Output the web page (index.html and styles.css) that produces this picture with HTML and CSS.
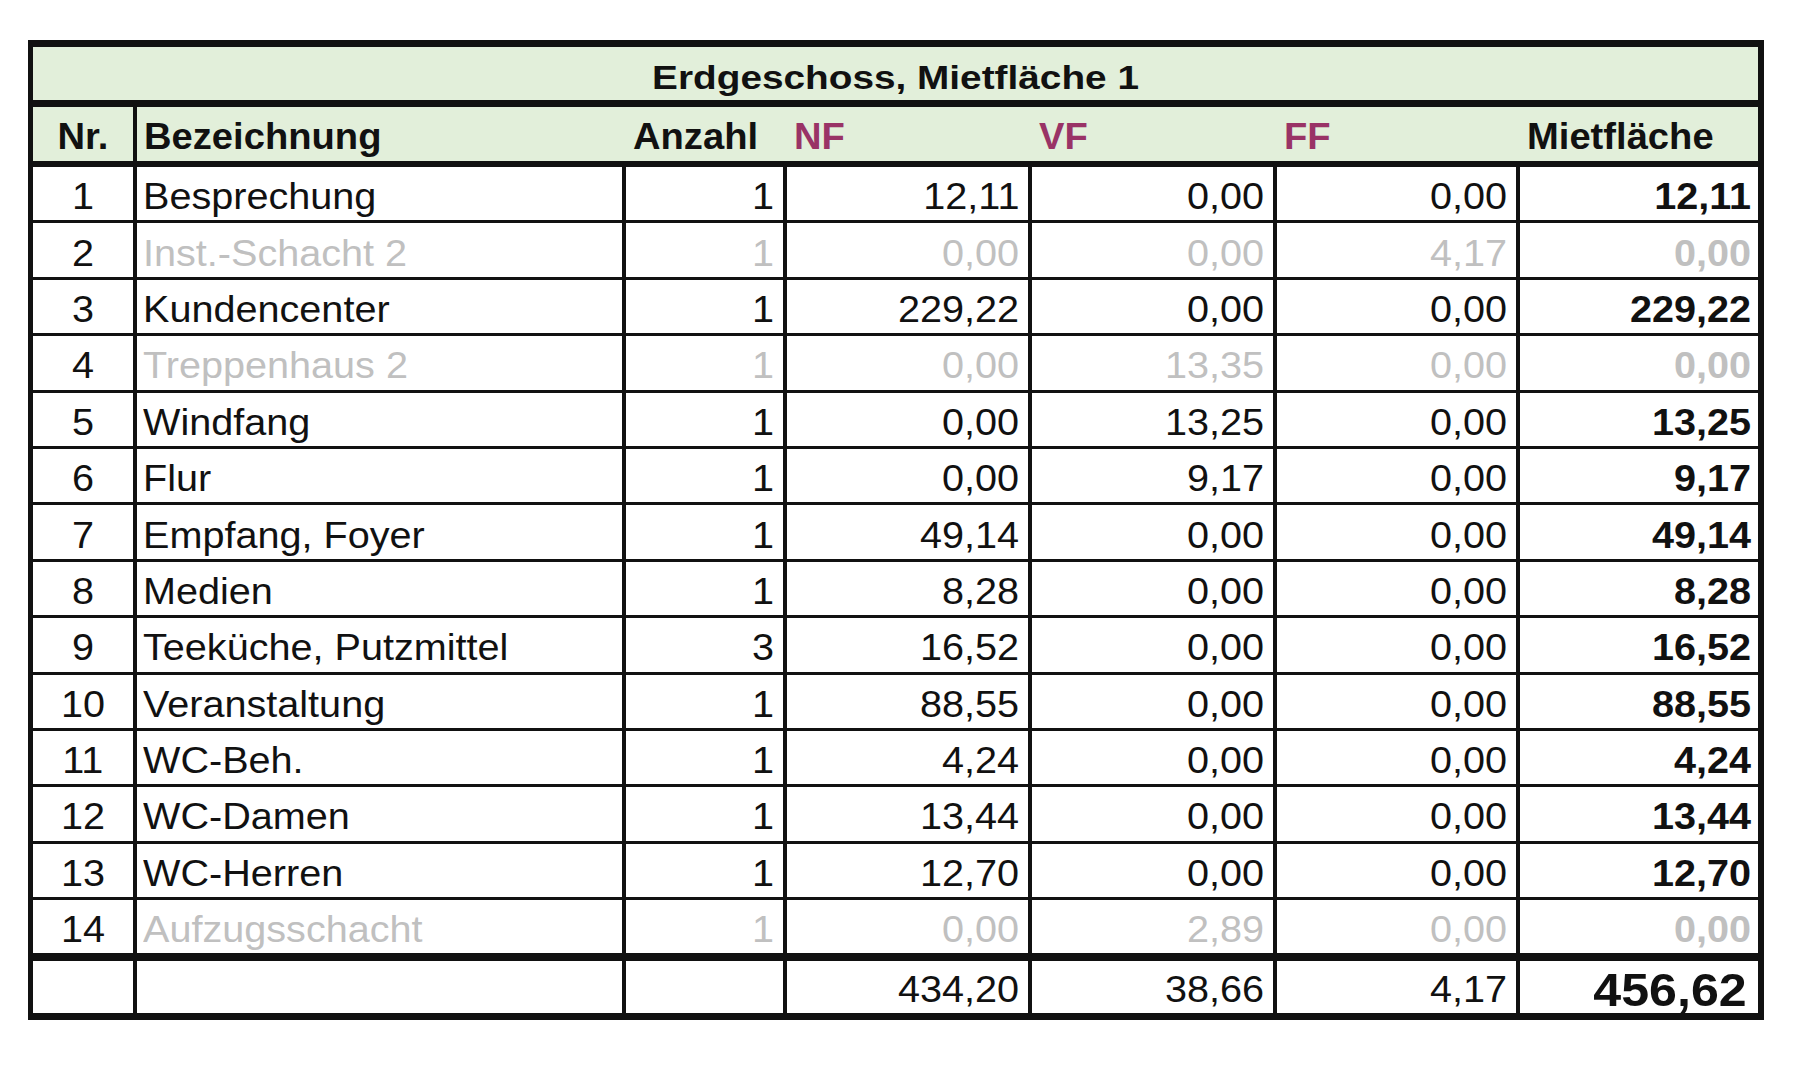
FILE: index.html
```html
<!DOCTYPE html>
<html lang="de">
<head>
<meta charset="utf-8">
<title>Erdgeschoss, Mietfläche 1</title>
<link rel="stylesheet" href="styles.css">
</head>
<body>
<div class="sheet">
  <div class="title"><span>Erdgeschoss, Mietfläche 1</span></div>

  <div class="hd nr"><span>Nr.</span></div>
  <div class="hd"><span>Bezeichnung</span></div>
  <div class="hd"><span>Anzahl</span></div>
  <div class="hd pk"><span>NF</span></div>
  <div class="hd pk"><span>VF</span></div>
  <div class="hd pk"><span>FF</span></div>
  <div class="hd"><span>Mietfläche</span></div>

  <div class="row">
    <div class="c nr"><span>1</span></div><div class="c txt"><span>Besprechung</span></div><div class="c num"><span>1</span></div><div class="c num"><span>12,11</span></div><div class="c num"><span>0,00</span></div><div class="c num"><span>0,00</span></div><div class="c num tot"><span>12,11</span></div>
  </div>
  <div class="row dim">
    <div class="c nr"><span>2</span></div><div class="c txt"><span>Inst.-Schacht 2</span></div><div class="c num"><span>1</span></div><div class="c num"><span>0,00</span></div><div class="c num"><span>0,00</span></div><div class="c num"><span>4,17</span></div><div class="c num tot"><span>0,00</span></div>
  </div>
  <div class="row">
    <div class="c nr"><span>3</span></div><div class="c txt"><span>Kundencenter</span></div><div class="c num"><span>1</span></div><div class="c num"><span>229,22</span></div><div class="c num"><span>0,00</span></div><div class="c num"><span>0,00</span></div><div class="c num tot"><span>229,22</span></div>
  </div>
  <div class="row dim">
    <div class="c nr"><span>4</span></div><div class="c txt"><span>Treppenhaus 2</span></div><div class="c num"><span>1</span></div><div class="c num"><span>0,00</span></div><div class="c num"><span>13,35</span></div><div class="c num"><span>0,00</span></div><div class="c num tot"><span>0,00</span></div>
  </div>
  <div class="row">
    <div class="c nr"><span>5</span></div><div class="c txt"><span>Windfang</span></div><div class="c num"><span>1</span></div><div class="c num"><span>0,00</span></div><div class="c num"><span>13,25</span></div><div class="c num"><span>0,00</span></div><div class="c num tot"><span>13,25</span></div>
  </div>
  <div class="row">
    <div class="c nr"><span>6</span></div><div class="c txt"><span>Flur</span></div><div class="c num"><span>1</span></div><div class="c num"><span>0,00</span></div><div class="c num"><span>9,17</span></div><div class="c num"><span>0,00</span></div><div class="c num tot"><span>9,17</span></div>
  </div>
  <div class="row">
    <div class="c nr"><span>7</span></div><div class="c txt"><span>Empfang, Foyer</span></div><div class="c num"><span>1</span></div><div class="c num"><span>49,14</span></div><div class="c num"><span>0,00</span></div><div class="c num"><span>0,00</span></div><div class="c num tot"><span>49,14</span></div>
  </div>
  <div class="row">
    <div class="c nr"><span>8</span></div><div class="c txt"><span>Medien</span></div><div class="c num"><span>1</span></div><div class="c num"><span>8,28</span></div><div class="c num"><span>0,00</span></div><div class="c num"><span>0,00</span></div><div class="c num tot"><span>8,28</span></div>
  </div>
  <div class="row">
    <div class="c nr"><span>9</span></div><div class="c txt"><span>Teeküche, Putzmittel</span></div><div class="c num"><span>3</span></div><div class="c num"><span>16,52</span></div><div class="c num"><span>0,00</span></div><div class="c num"><span>0,00</span></div><div class="c num tot"><span>16,52</span></div>
  </div>
  <div class="row">
    <div class="c nr"><span>10</span></div><div class="c txt"><span>Veranstaltung</span></div><div class="c num"><span>1</span></div><div class="c num"><span>88,55</span></div><div class="c num"><span>0,00</span></div><div class="c num"><span>0,00</span></div><div class="c num tot"><span>88,55</span></div>
  </div>
  <div class="row">
    <div class="c nr"><span>11</span></div><div class="c txt"><span>WC-Beh.</span></div><div class="c num"><span>1</span></div><div class="c num"><span>4,24</span></div><div class="c num"><span>0,00</span></div><div class="c num"><span>0,00</span></div><div class="c num tot"><span>4,24</span></div>
  </div>
  <div class="row">
    <div class="c nr"><span>12</span></div><div class="c txt"><span>WC-Damen</span></div><div class="c num"><span>1</span></div><div class="c num"><span>13,44</span></div><div class="c num"><span>0,00</span></div><div class="c num"><span>0,00</span></div><div class="c num tot"><span>13,44</span></div>
  </div>
  <div class="row">
    <div class="c nr"><span>13</span></div><div class="c txt"><span>WC-Herren</span></div><div class="c num"><span>1</span></div><div class="c num"><span>12,70</span></div><div class="c num"><span>0,00</span></div><div class="c num"><span>0,00</span></div><div class="c num tot"><span>12,70</span></div>
  </div>
  <div class="row dim last">
    <div class="c nr"><span>14</span></div><div class="c txt"><span>Aufzugsschacht</span></div><div class="c num"><span>1</span></div><div class="c num"><span>0,00</span></div><div class="c num"><span>2,89</span></div><div class="c num"><span>0,00</span></div><div class="c num tot"><span>0,00</span></div>
  </div>
  <div class="row sum">
    <div class="c nr"></div><div class="c txt"></div><div class="c num"></div><div class="c num"><span>434,20</span></div><div class="c num"><span>38,66</span></div><div class="c num"><span>4,17</span></div><div class="c num tot grand"><span>456,62</span></div>
  </div>
</div>
</body>
</html>
```

FILE: styles.css
```css
html, body {
  margin: 0;
  padding: 0;
  background: #ffffff;
}

body {
  font-family: "Liberation Sans", Arial, sans-serif;
  color: #111111;
}

.sheet {
  display: grid;
  grid-template-columns: 104px 489px 161px 245px 245px 243px 238px;
  width: 1736px;
  box-sizing: border-box;
  margin: 40px 0 0 28px;
  border-style: solid;
  border-color: #111111;
  border-width: 7px 6px 7px 5px;
}

.title {
  grid-column: 1 / -1;
  height: 60px;
  box-sizing: border-box;
  border-bottom: 7px solid #111111;
  background: #e2efda;
  display: flex;
  align-items: center;
  justify-content: center;
  padding-top: 6px;
  font-weight: bold;
  font-size: 34px;
  line-height: 1;
  white-space: nowrap;
}

.title span {
  transform: scaleX(1.14);
}

.hd {
  height: 60px;
  box-sizing: border-box;
  border-bottom: 6px solid #111111;
  background: #e2efda;
  display: flex;
  align-items: center;
  padding: 5px 0 0 7px;
  font-weight: bold;
  font-size: 36px;
  line-height: 1;
  white-space: nowrap;
}

.hd span {
  transform: scaleX(1.06);
  transform-origin: left center;
}

.hd.nr {
  justify-content: center;
  padding-left: 0;
  border-right: 4px solid #111111;
}

.hd.nr span {
  transform-origin: center;
}

.pk {
  color: #993366;
}

.row {
  display: contents;
}

.c {
  height: 56.4px;
  box-sizing: border-box;
  border-bottom: 3px solid #111111;
  border-right: 4px solid #111111;
  display: flex;
  align-items: center;
  padding-top: 7px;
  font-size: 36px;
  line-height: 1;
  white-space: nowrap;
}

.c span {
  transform: scaleX(1.1);
}

.c.nr {
  justify-content: center;
}

.c.txt {
  padding-left: 6px;
}

.c.txt span {
  transform-origin: left center;
}

.c.num {
  justify-content: flex-end;
  padding-right: 9px;
}

.c.num span {
  transform-origin: right center;
}

.c.tot {
  border-right: 0;
  font-weight: bold;
  padding-right: 7px;
}

.c.tot span {
  transform: scaleX(1.1);
}

.dim .c.txt,
.dim .c.num {
  color: #c0c0c0;
}

.last .c {
  height: 60.8px;
  border-bottom-width: 8px;
}

.sum .c {
  height: 52px;
  border-bottom: 0;
}

.c.grand {
  font-size: 46px;
  padding-right: 11px;
}

.c.grand span {
  transform: scaleX(1.09);
}
```
